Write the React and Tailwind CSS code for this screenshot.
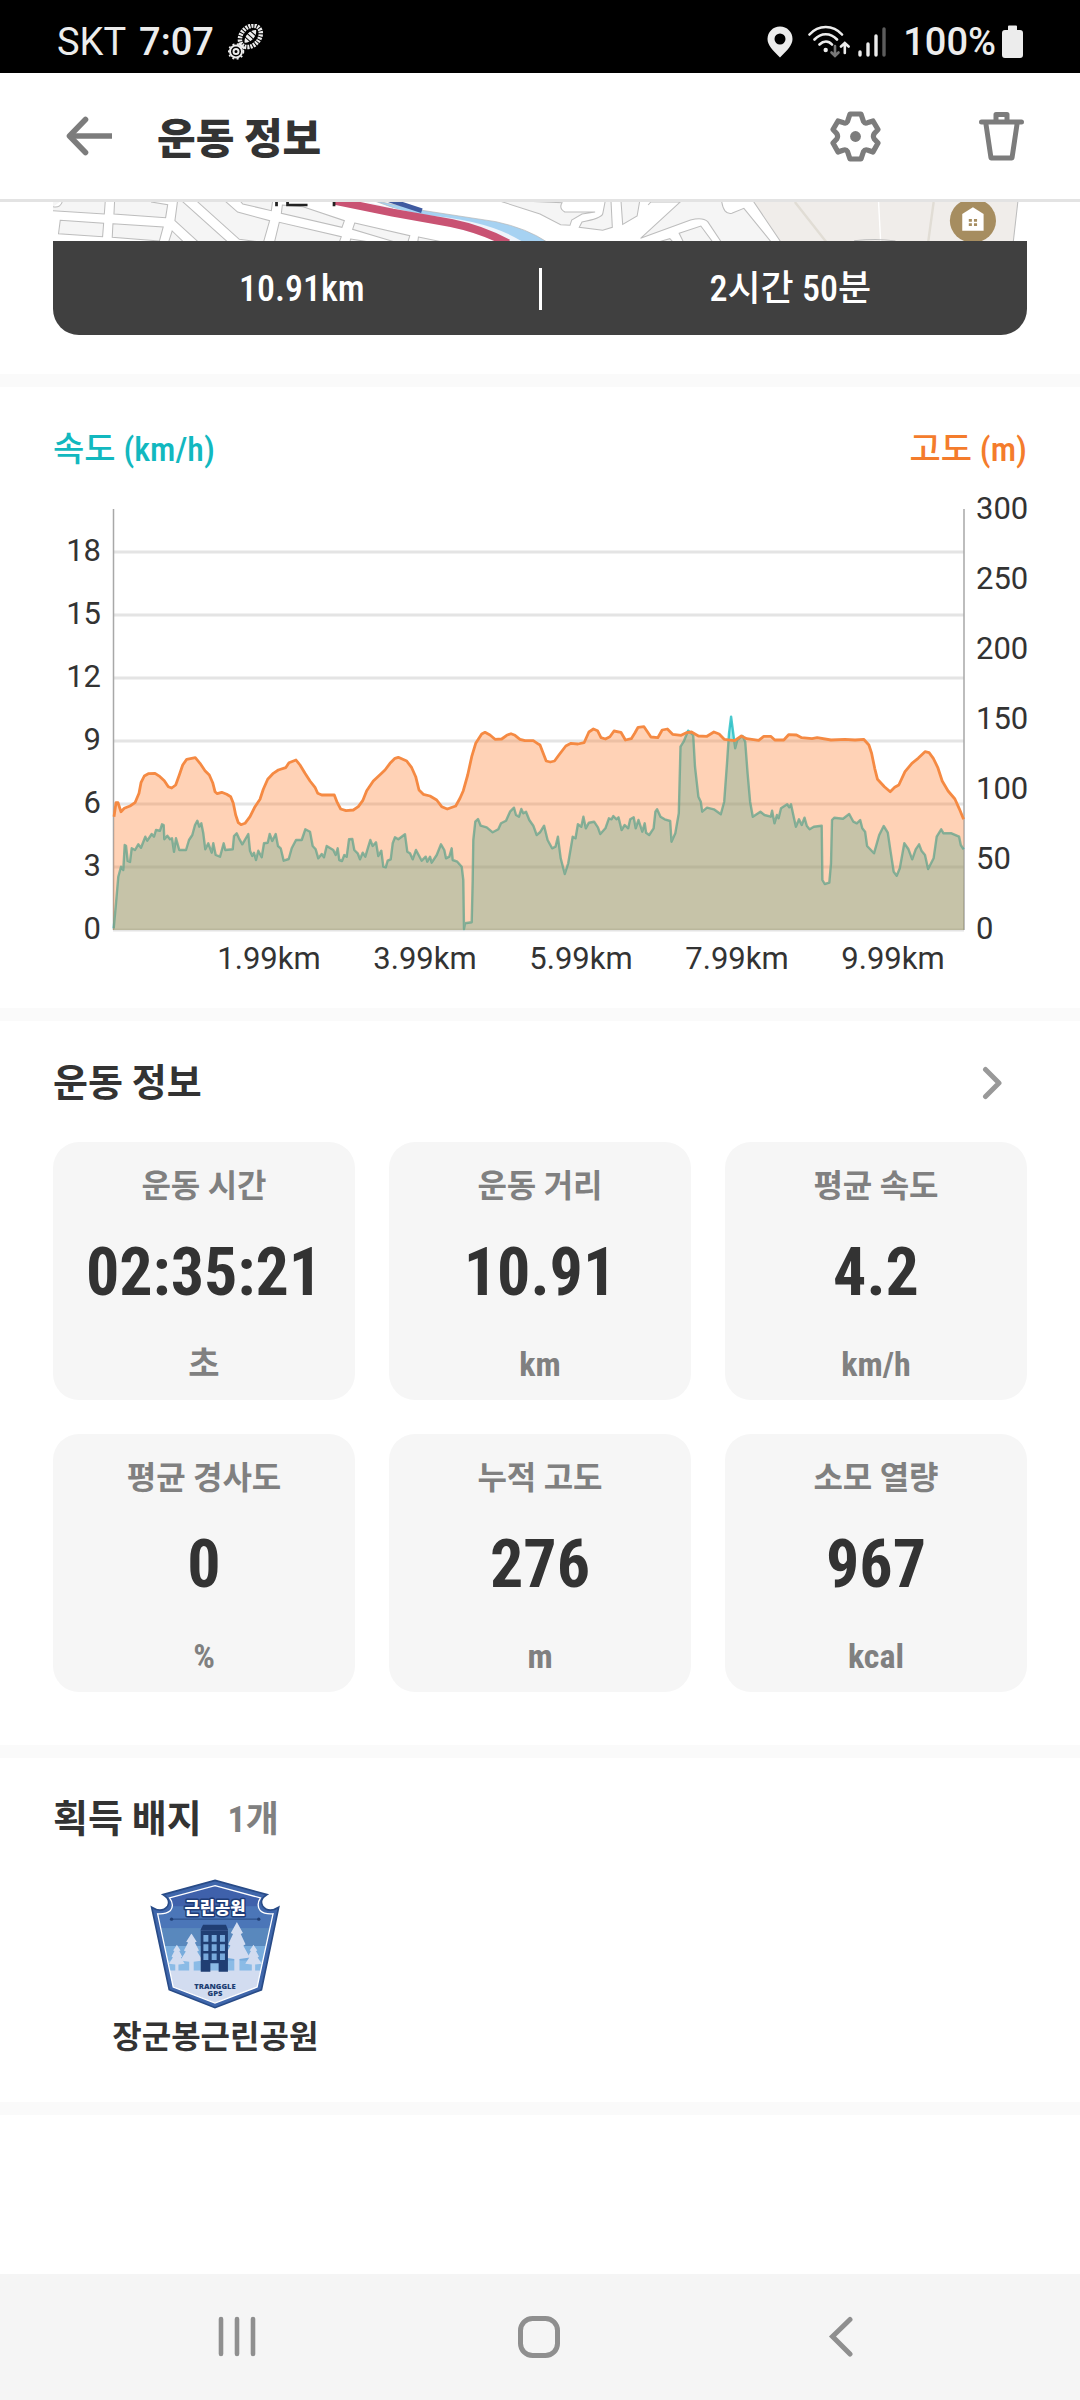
import React from "react";

const PLOT = { left: 113, right: 964, top: 509, bottom: 930 };

const LEG_ONE = { x0: 40, y0: 480, sx: 3, sy: 3 };
const LEG_TWO = { x0: 540, y0: 480, sx: 2.904, sy: 3 };

const ELEVATION_ONE = [
  222,1010,228,968,234,968,243,995,253,985,270,978,285,968,297,940,303,908,313,888,325,881,345,880,360,890,373,902,385,920,
  395,924,407,915,418,885,428,855,440,838,466,833,480,850,495,872,508,885,518,908,525,935,532,941,545,937,560,943,572,950,
  580,970,587,1005,595,1028,603,1034,615,1030,630,1010,645,980,660,958,670,928,683,898,700,880,715,870,737,863,747,848,
  768,840,780,855,795,880,810,903,825,922,833,940,845,945,883,945,892,968,902,987,918,992,940,990,955,980,968,962,980,932,
  1000,903,1020,884,1035,870,1050,850,1065,835,1075,832,1100,843,1115,863,1127,890,1137,930,1150,943,1170,948,1190,960,
  1205,980,1222,987,1247,978,1260,955,1270,932,1283,885,1295,830,1307,790,1325,762,1335,757,1350,765,1365,778,1385,777,
  1400,766,1413,761,1425,766,1440,778,1455,782,1480,782,1492,790,
];
const ELEVATION_TWO = [
  0,795,18,843,30,846,42,843,55,825,75,798,90,790,110,792,128,788,142,756,155,747,167,752,177,773,190,777,203,770,215,753,
  235,757,248,780,265,776,275,760,285,742,302,740,312,755,322,771,342,773,355,750,370,747,385,763,410,766,425,758,440,756,
  460,768,485,769,505,756,520,762,535,778,565,782,585,768,600,776,635,781,650,769,670,769,682,780,708,780,722,764,745,765,
  760,773,790,776,805,773,845,780,885,778,915,780,940,778,955,795,963,820,972,865,980,898,1000,920,1017,935,1030,922,
  1042,915,1060,875,1080,850,1098,835,1118,815,1130,818,1142,835,1155,862,1168,903,1185,933,1205,957,1217,985,1230,1018,
];
const SPEED_ONE = [
  221,1345,228,1270,235,1190,243,1160,250,1170,254,1095,258,1097,263,1143,270,1146,275,1105,285,1110,295,1093,303,1103,
  316,1070,322,1082,335,1062,342,1070,348,1050,360,1052,366,1033,371,1035,373,1078,382,1067,390,1078,396,1075,402,1115,
  408,1075,418,1110,438,1110,447,1080,457,1065,465,1035,472,1022,478,1040,484,1030,490,1060,496,1108,505,1090,515,1118,
  520,1090,527,1125,540,1130,551,1090,556,1110,578,1108,582,1068,590,1060,597,1075,607,1093,625,1062,630,1112,637,1128,
  642,1118,648,1140,655,1112,665,1132,672,1090,683,1088,689,1062,697,1083,707,1062,714,1098,722,1105,731,1142,746,1137,
  755,1105,768,1080,785,1080,796,1048,810,1055,818,1098,827,1108,835,1135,845,1122,852,1132,860,1098,880,1110,887,1125,
  893,1105,898,1140,906,1143,913,1125,920,1130,927,1078,937,1077,943,1110,953,1120,960,1138,968,1118,976,1130,985,1100,
  991,1080,998,1098,1008,1087,1015,1128,1024,1112,1030,1160,1037,1162,1043,1142,1052,1138,1058,1090,1065,1072,1075,1078,
  1095,1063,1102,1115,1110,1120,1118,1138,1128,1110,1145,1142,1157,1130,1162,1145,1170,1130,1175,1148,1190,1125,1203,1093,
  1213,1110,1218,1135,1228,1130,1235,1105,1238,1140,1252,1145,1265,1160,1270,1200,1272,1347,1275,1330,1295,1327,1298,1200,
  1300,1080,1306,1025,1314,1017,1322,1037,1340,1042,1358,1057,1375,1048,1383,1030,1398,1022,1410,995,1422,983,1428,1005,
  1437,1010,1444,987,1450,1000,1458,995,1468,1020,1480,1037,1490,1065,
];
const SPEED_TWO = [
  0,1057,12,1037,22,1080,35,1105,45,1100,52,1070,60,1135,72,1182,82,1150,95,1070,103,1075,110,1033,120,1040,126,1010,
  133,1045,142,1028,157,1025,168,1042,175,1062,190,1045,200,1015,208,1018,213,1008,222,1018,228,1012,237,1050,246,1035,
  256,1045,262,1018,272,1012,278,1045,286,1020,297,1055,304,1030,308,1058,317,1065,330,1045,335,995,340,988,350,1010,
  362,1018,378,1023,382,1085,393,1060,403,1000,408,800,417,785,430,752,445,765,450,860,460,950,467,965,471,995,485,983,
  505,988,525,1003,535,965,543,850,549,760,555,710,563,775,567,805,573,780,588,768,596,785,603,880,610,965,618,1010,
  640,995,652,1005,670,1010,674,992,681,1030,688,1005,693,1015,700,985,718,973,724,982,729,973,737,1012,743,1040,752,1018,
  760,1035,768,1013,775,1038,783,1048,795,1040,818,1037,820,1200,827,1212,840,1208,845,1150,848,1020,855,1013,880,1016,
  898,1002,910,1025,920,1030,930,1020,936,1045,944,1055,950,1098,970,1120,985,1065,998,1038,1010,1058,1018,1115,1027,1175,
  1036,1187,1045,1165,1058,1090,1070,1108,1081,1138,1091,1108,1101,1093,1108,1112,1118,1125,1127,1167,1143,1135,1152,1070,
  1165,1048,1172,1060,1195,1060,1217,1070,1222,1095,1230,1108,
];

function toPoints(samples, leg) {
  const out = [];
  for (let i = 0; i < samples.length; i += 2) {
    const x = leg.x0 + samples[i] / leg.sx;
    const y = leg.y0 + samples[i + 1] / leg.sy;
    out.push(`${x.toFixed(1)},${y.toFixed(1)}`);
  }
  return out;
}

const elevation = [...toPoints(ELEVATION_ONE, LEG_ONE), ...toPoints(ELEVATION_TWO, LEG_TWO)].join(" ");
const speed = [...toPoints(SPEED_ONE, LEG_ONE), ...toPoints(SPEED_TWO, LEG_TWO)].join(" ");
const closing = ` ${PLOT.right},${PLOT.bottom} ${PLOT.left},${PLOT.bottom}`;

const SPEED_TICKS = [0, 3, 6, 9, 12, 15, 18];
const ELEVATION_TICKS = [0, 50, 100, 150, 200, 250, 300];
const DISTANCE_TICKS = ["1.99km", "3.99km", "5.99km", "7.99km", "9.99km"];

function SpeedChart() {
  return (
    <svg viewBox="53 490 974 495" className="mt-[16px] block w-full overflow-visible" role="img" aria-label="속도와 고도 그래프">
      {SPEED_TICKS.map((t) => (
        <line key={t} x1={PLOT.left} x2={PLOT.right} y1={930 - t * 21} y2={930 - t * 21} stroke="#e4e4e4" strokeWidth="3" />
      ))}
      <path d="M113.500 509V930M964 509V930" stroke="#a8a8a8" strokeWidth="1.500" />
      <polygon points={speed + closing} fill="#00bcc2" fillOpacity="0.34" />
      <polyline points={speed} fill="none" stroke="#12b8bf" strokeOpacity="0.75" strokeWidth="2.400" strokeLinejoin="round" />
      <polygon points={elevation + closing} fill="#ff7f2d" fillOpacity="0.35" />
      <polyline points={elevation} fill="none" stroke="#f58a43" strokeWidth="2.800" strokeLinejoin="round" />
      <g fill="#333333" fontSize="31" className="font-['Roboto',sans-serif]">
        {SPEED_TICKS.map((t) => (
          <text key={t} x="101" y={939 - t * 21} textAnchor="end">{t}</text>
        ))}
        {ELEVATION_TICKS.map((t, i) => (
          <text key={t} x="976" y={939 - i * 70}>{t}</text>
        ))}
        {DISTANCE_TICKS.map((t, i) => (
          <text key={t} x={269 + i * 156} y="969" textAnchor="middle">{t}</text>
        ))}
      </g>
    </svg>
  );
}

function StatusBar() {
  return (
    <div className="flex h-[73px] items-center justify-between bg-black pl-[57px] pr-[57px] pt-[10px] font-['Roboto',sans-serif] text-[38px] leading-[44px] text-[#ececec]">
      <div className="flex items-center">
        <span>SKT</span>
        <span className="ml-[13px] font-medium">7:07</span>
        <svg className="ml-[14px] h-[36px] w-[36px]" viewBox="0 0 36 36" fill="none" stroke="#ececec" aria-hidden="true">
          <g transform="rotate(42 22 12)">
            <ellipse cx="22.500" cy="12" rx="9" ry="12" strokeWidth="4.500" strokeDasharray="2 1" />
            <path d="M22.500 3.500c5 4 5 13 0 17c-5-4-5-13 0-17z" fill="#ececec" stroke="none" />
            <path d="M18 8h9M18 12h9M18 16h9" stroke="#000" strokeWidth="1" />
            <path d="M19 25h7" strokeWidth="2.500" />
          </g>
          <circle cx="8" cy="27.500" r="6" strokeWidth="2" />
          <circle cx="8" cy="27.500" r="7.500" strokeWidth="1.500" strokeDasharray="2 2.500" />
          <circle cx="8" cy="27.500" r="2.500" strokeWidth="2" />
        </svg>
      </div>
      <div className="flex items-center">
        <svg className="h-[32px] w-[26px]" viewBox="0 0 26 32" aria-hidden="true">
          <path fillRule="evenodd" fill="#ececec" d="M13 0.500C6 0.500 0.500 6 0.500 13c0 6 5 11 12.500 18.500C20.500 24 25.500 19 25.500 13C25.500 6 20 0.500 13 0.500zM13 7.500a5.500 5.500 0 1 1 0 11a5.500 5.500 0 1 1 0-11z" />
        </svg>
        <svg className="ml-[15px] h-[33px] w-[42px]" viewBox="0 0 42 33" fill="none" stroke="#ececec" strokeWidth="2.600" strokeLinecap="round" aria-hidden="true">
          <path d="M1.500 9.500C10.500-0.500 25-0.500 34 9.500M6.500 14.500c6.500-7 16-7 22.500 0M11.500 19.500c4-4 9-4 12.500 0" />
          <circle cx="17.700" cy="25" r="2.200" fill="#ececec" stroke="none" />
          <path d="M27 21v9.500M23.500 27.500l3.500 3.500 3.500-3.500" stroke="#777" />
          <path d="M36.800 28V18.500M33 21.500l3.800-3.500 3.800 3.500" />
        </svg>
        <svg className="ml-[8px] h-[32px] w-[28px]" viewBox="0 0 28 32" fill="none" stroke="#ececec" strokeWidth="3.400" strokeLinecap="round" aria-hidden="true">
          <path d="M2 26v3M10 18v11M18 10v19" />
          <path d="M26 3v26" stroke="#5c5c5c" />
        </svg>
        <span className="ml-[17px] font-medium">100%</span>
        <svg className="ml-[6px] h-[34px] w-[21px]" viewBox="0 0 21 34" fill="#ececec" aria-hidden="true">
          <path d="M6 1.500Q6 0.500 7 0.500h7q1 0 1 1V5H18q3 0 3 3V30q0 3-3 3H3q-3 0-3-3V8q0-3 3-3h3z" />
        </svg>
      </div>
    </div>
  );
}

function Header() {
  return (
    <header className="flex h-[129px] items-center border-b-[3px] border-[#e3e3e3] pl-[65px] pr-[56px]">
      <button type="button" aria-label="뒤로" className="flex">
        <svg className="h-[40px] w-[48px]" viewBox="0 0 48 40" fill="none" stroke="#7c7c7c" strokeWidth="5.600" strokeLinejoin="round" aria-hidden="true">
          <path d="M47 20H5" />
          <path d="M20.500 3.500L4.500 20L20.500 36.500" strokeLinecap="round" />
        </svg>
      </button>
      <h1 className="ml-[44px] pt-[8px] text-[42px] font-black leading-[60px]">운동 정보</h1>
      <button type="button" aria-label="설정" className="ml-auto flex">
        <svg className="h-[51px] w-[51px]" viewBox="0 0 51 51" fill="none" stroke="#7c7c7c" strokeWidth="5.200" strokeLinejoin="round" aria-hidden="true">
          <path d="M20 3H31L33.500 10.500Q35 13 38 11.500L43 10L48 18.500L44.300 22.500Q42.500 25.300 44.300 28L48 32L43 41L38 39.200Q35 38 33.500 40.500L31 48H20L17.500 40.500Q16 38 13 39.200L8 41L3 32L6.700 28Q8.500 25.300 6.700 22.500L3 18.500L8 10L13 11.500Q16 13 17.500 10.500Z" />
          <circle cx="25.500" cy="25.500" r="5.400" fill="#7c7c7c" stroke="none" />
        </svg>
      </button>
      <button type="button" aria-label="삭제" className="ml-[98px] flex">
        <svg className="h-[50px] w-[45px]" viewBox="0 0 45 50" fill="none" stroke="#7c7c7c" strokeWidth="5" strokeLinejoin="round" strokeLinecap="round" aria-hidden="true">
          <path d="M2.500 11H42.500M17 10V3.500H28V10M6.800 12L12 47H33L38.200 12" />
        </svg>
      </button>
    </header>
  );
}

function MapStrip() {
  return (
    <svg viewBox="154 36 2828 117" preserveAspectRatio="none" className="block h-[39px] w-full bg-white" aria-hidden="true">
      <g fill="#f5f5f5" stroke="#bdbdbd" strokeWidth="3">
        <path d="M150 30L306 30L303 72L154 62M154 50Q178 55 182 30" />
        <path d="M333 30L331 72L481 83L487 44L440 36V30Z" />
        <path d="M175 91L301 100L298 140L170 131Z" />
        <path d="M328 101L474 111L463 153L326 142Z" />
        <path d="M516 30L508 92L575 155H660L525 30Z" />
        <path d="M500 123L532 155H490Z" />
        <path d="M568 30L695 148L765 157L783 92L690 66L650 30Z" />
        <path d="M695 30L705 42L788 62L792 30Z" />
        <path d="M820 45L817 70L993 112L1000 92L880 50Z" />
        <path d="M811 97L797 157H985L991 140Z" />
        <path d="M1030 99L1190 137L1184 157H1150L1024 118Z" />
        <path d="M1018 147L1080 157H1016Z" />
        <path d="M1215 141L1290 157H1213Z" />
        <path d="M1460 36L1568 72L1628 104L1655 106L1660 90L1690 72L1728 66L1640 66Q1622 55 1632 38L1440 30Z" />
        <path d="M1758 30L1750 72Q1745 85 1690 96L1682 112L1750 121L1778 112L1774 30Z" />
        <path d="M1803 30L1808 103L1850 78L1858 30Z" />
        <path d="M1882 45L1895 30H2095Q2100 75 2125 70L2160 55L2240 157H2095L2055 95Q2040 80 2005 90L1860 145L1975 36L1890 36Z" />
        <path d="M1972 130L2035 108L2070 157H1985Z" />
        <path d="M1908 157L1945 146L1955 157Z" />
      </g>
      <path d="M2185 30L2268 157H2942L2956 30Z" fill="#f0edea" stroke="#bdbdbd" strokeWidth="3" />
      <path d="M2308 36L2400 157M2711 36L2695 157" stroke="#e1ddd5" strokeWidth="7" />
      <path d="M2551 36L2557 153" stroke="#fff" strokeWidth="4" />
      <path d="M2480 152Q2550 144 2600 153" fill="none" stroke="#bdbdbd" strokeWidth="3" />
      <path d="M1080 30L1220 60L1440 95Q1530 115 1590 157H1480L1380 110L1200 75Z" fill="#a6d2f2" stroke="#b5b5b5" strokeWidth="2" />
      <path d="M1040 30L1230 75Q1420 90 1520 157H1470Z" fill="#eef4fb" />
      <path d="M1130 30L1225 62" stroke="#3f5aa0" strokeWidth="14" />
      <path d="M970 32L1140 68L1310 99Q1400 118 1475 160" fill="none" stroke="#c95373" strokeWidth="24" />
      <path d="M803 36V49M835 36V45H893M970 36V49" fill="none" stroke="#222" strokeWidth="8" />
      <ellipse cx="2825" cy="92" rx="67" ry="66" fill="#a68d60" />
      <path d="M2794 122V72L2825 52L2856 72V122Z" fill="#fff" />
      <path d="M2813 87h9v8h-9zM2828 87h9v8h-9zM2813 100h9v8h-9zM2828 100h9v8h-9z" fill="#a68d60" />
    </svg>
  );
}

function Tree({ x, y, w, h }) {
  return (
    <svg x={x} y={y} width={w} height={h} viewBox="0 0 60 100" preserveAspectRatio="none" fill="#d2dcf0">
      <path d="M30 0L44 22L39 24L50 45L45 48L60 72L36 75V100H24V75L0 72L15 48L10 45L21 24L16 22Z" />
    </svg>
  );
}

function ParkBadge() {
  const shield = "M253 60L410 103Q385 118 397 138Q415 160 445 141L393 390L253 444L115 390L62 141Q92 160 110 138Q121 118 96 103Z";
  const face = "M253 76L390 113Q376 135 390 152Q402 163 428 161L380 382L253 430L127 382L80 161Q104 163 118 152Q132 135 116 113Z";
  return (
    <svg viewBox="58 56 390 392" className="block h-[130px] w-[130px]" role="img" aria-label="근린공원 배지">
      <defs>
        <clipPath id="badge-face"><path d={face} /></clipPath>
      </defs>
      <path d={shield} fill="#3f66ab" stroke="#284b87" strokeWidth="5" />
      <g clipPath="url(#badge-face)">
        <rect x="60" y="60" width="390" height="80" fill="#3f61ab" />
        <rect x="60" y="138" width="390" height="68" fill="#4b76b8" />
        <rect x="60" y="204" width="390" height="56" fill="#5988bd" />
        <rect x="60" y="258" width="390" height="80" fill="#78acdc" />
        <rect x="60" y="302" width="390" height="32" fill="#8bbbe6" />
        <rect x="60" y="332" width="390" height="120" fill="#d2dcf0" />
        <Tree x="114" y="254" w="48" h="80" />
        <Tree x="148" y="220" w="68" h="114" />
        <Tree x="280" y="186" w="78" h="148" />
        <Tree x="344" y="254" w="50" h="80" />
      </g>
      <path d={face} fill="none" stroke="#fff" strokeWidth="4" />
      <path d="M210 208L217 194H286L292 208V336H264V310H239V336H210Z" fill="#203e73" />
      <path d="M218 225h15v20h-15zM243 225h15v20h-15zM268 225h15v20h-15zM218 253h15v20h-15zM243 253h15v20h-15zM268 253h15v20h-15zM218 281h15v19h-15zM243 281h15v19h-15zM268 281h15v19h-15z" fill="#78a9dc" />
      <path d="M210 211H292" stroke="#3f5e96" strokeWidth="2" />
      <path d="M122 177H385" stroke="#203e73" strokeWidth="2.500" />
      <circle cx="122" cy="177" r="5" fill="#203e73" />
      <circle cx="385" cy="177" r="5" fill="#203e73" />
      <g textAnchor="middle" className="font-['Noto_Sans_CJK_KR',sans-serif]" fontWeight="900">
        <text x="253" y="161" fontSize="50" fill="#fff" stroke="#1f3d78" strokeWidth="9" strokeLinejoin="round" paintOrder="stroke">근린공원</text>
      </g>
      <g textAnchor="middle" className="font-['Open_Sans',sans-serif]" fontWeight="800" fontSize="23" fill="#203e73">
        <text x="253" y="387">TRANGGLE</text>
        <text x="253" y="409">GPS</text>
      </g>
    </svg>
  );
}

const STATS = [
  { label: "운동 시간", value: "02:35:21", unit: "초" },
  { label: "운동 거리", value: "10.91", unit: "km" },
  { label: "평균 속도", value: "4.2", unit: "km/h" },
  { label: "평균 경사도", value: "0", unit: "%" },
  { label: "누적 고도", value: "276", unit: "m" },
  { label: "소모 열량", value: "967", unit: "kcal" },
];

function StatCard({ label, value, unit }) {
  return (
    <div className="flex flex-col items-center rounded-[26px] bg-[#f6f6f6] pb-[12px] pt-[20px] font-bold">
      <dt className="text-[32px] leading-[48px] text-[#808080]">{label}</dt>
      <dd className="mt-[25px] text-[66px] leading-[76px]">{value}</dd>
      <dd className="mt-[29px] text-[34px] leading-[48px] text-[#808080]">{unit}</dd>
    </div>
  );
}

function Band() {
  return <div className="h-[13px] bg-[#fafafa]" />;
}

export default function App() {
  return (
    <div className="flex min-h-screen flex-col bg-white font-['Roboto_Condensed','Roboto','Noto_Sans_CJK_KR',sans-serif] text-[#333333]">
      <StatusBar />
      <Header />
      <main>
        <section className="px-[53px] pb-[39px]">
          <MapStrip />
          <div className="flex h-[94px] items-center rounded-b-[26px] bg-[#404040] pt-[2px] text-[36px] font-medium leading-[56px] text-white">
            <span className="flex-1 pl-[12px] text-center">10.91km</span>
            <span className="h-[42px] w-[3px] bg-white" />
            <span className="flex-1 pl-[12px] text-center">2시간 50분</span>
          </div>
        </section>
        <Band />
        <section className="px-[53px] pb-[23px] pt-[37px]">
          <div className="flex justify-between text-[34px] font-medium leading-[50px]">
            <h2 className="text-[#12b8bf]">속도 (km/h)</h2>
            <h2 className="text-[#f47c2c]">고도 (m)</h2>
          </div>
          <SpeedChart />
        </section>
        <Band />
        <section className="px-[53px] pb-[53px] pt-[33px]">
          <div className="flex items-center justify-between">
            <h2 className="text-[38px] font-bold leading-[58px]">운동 정보</h2>
            <button type="button" aria-label="운동 정보 더보기" className="mr-[24px] flex">
              <svg className="h-[34px] w-[21px]" viewBox="0 0 21 34" fill="none" stroke="#999999" strokeWidth="5" strokeLinecap="round" strokeLinejoin="round" aria-hidden="true">
                <path d="M3.500 3.500L17 17L3.500 30.500" />
              </svg>
            </button>
          </div>
          <dl className="mt-[30px] grid grid-cols-3 gap-[34px]">
            {STATS.map((s) => (
              <StatCard key={s.label} {...s} />
            ))}
          </dl>
        </section>
        <Band />
        <section className="px-[53px] pb-[41px] pt-[33px]">
          <div className="flex items-baseline gap-[26px] font-bold leading-[56px]">
            <h2 className="text-[38px]">획득 배지</h2>
            <span className="text-[36px] text-[#808080]">1개</span>
          </div>
          <div className="mt-[31px] grid grid-cols-3">
            <figure className="flex flex-col items-center">
              <ParkBadge />
              <figcaption className="mt-[4px] text-[32px] font-bold leading-[48px]">장군봉근린공원</figcaption>
            </figure>
          </div>
        </section>
        <Band />
      </main>
      <nav className="mt-auto grid h-[126px] grid-cols-[1fr_130px_1fr] items-center bg-[#f5f5f5] pr-[2px]">
        <button type="button" aria-label="최근 앱" className="flex justify-center">
          <svg className="h-[42px] w-[38px]" viewBox="0 0 38 42" stroke="#8f8f8f" strokeWidth="4.600" strokeLinecap="round" aria-hidden="true">
            <path d="M3 3V38M19 3V38M35 3V38" />
          </svg>
        </button>
        <button type="button" aria-label="홈" className="flex justify-center">
          <svg className="h-[42px] w-[42px]" viewBox="0 0 42 42" fill="none" stroke="#8f8f8f" strokeWidth="5" aria-hidden="true">
            <rect x="2.500" y="2.500" width="37" height="37" rx="12" />
          </svg>
        </button>
        <button type="button" aria-label="뒤로 가기" className="flex justify-center">
          <svg className="h-[42px] w-[26px]" viewBox="0 0 26 42" fill="none" stroke="#8f8f8f" strokeWidth="5" strokeLinecap="round" aria-hidden="true">
            <path d="M22 3.500L4.500 20.500L22 38" />
          </svg>
        </button>
      </nav>
    </div>
  );
}
